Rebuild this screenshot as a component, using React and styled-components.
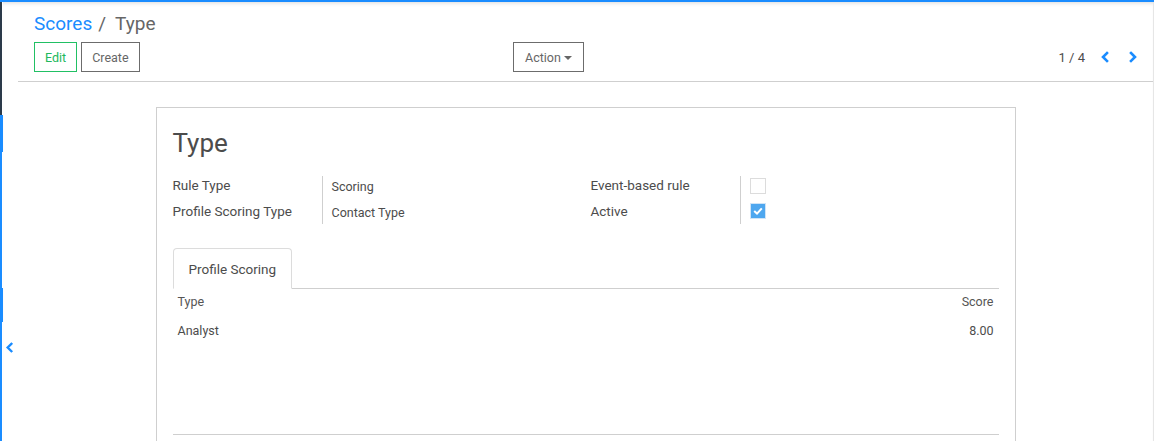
import React from 'react';
import styled, { createGlobalStyle } from 'styled-components';

const Global = createGlobalStyle`
  html, body {
    margin: 0;
    padding: 0;
    background: #fff;
    font-family: Roboto, "Liberation Sans", sans-serif;
    color: #4c4c4c;
  }
`;

const Frame = styled.div`
  position: relative;
  display: flex;
  width: 1154px;
  height: 441px;
  overflow: hidden;
  border-top: 2px solid #1a8cff;
  box-sizing: border-box;
`;

const Rail = styled.div`
  display: flex;
  flex-direction: column;
  width: 3px;
  flex: none;
`;

const RailPiece = styled.div`
  height: ${(p) => (p.h ? `${p.h}px` : 'auto')};
  flex: ${(p) => (p.h ? 'none' : '1')};
  width: ${(p) => p.w}px;
  background: ${(p) => (p.dark ? '#2b3a4a' : '#1a8cff')};
`;

const Toggle = styled.div`
  position: absolute;
  left: 4px;
  top: 340px;
  color: #1a8cff;
  display: flex;
`;

const Main = styled.div`
  flex: 1;
  display: flex;
  flex-direction: column;
  border-right: 1px solid #e6e6e6;
  box-shadow: inset 0 4px 4px -3px rgba(0, 0, 0, 0.15);
`;

const ControlPanel = styled.div`
  margin-left: 15px;
  padding: 9px 14px 9px 16px;
  border-bottom: 1px solid #cfcfcf;
`;

const Breadcrumb = styled.div`
  font-size: 19px;
  line-height: 24px;
  height: 24px;
  padding-top: 1px;
  margin-bottom: 6px;
  color: #666;
`;

const Crumb = styled.span`
  color: #1a8cff;
`;

const Sep = styled.span`
  margin: 0 9px 0 6px;
`;

const ButtonRow = styled.div`
  display: grid;
  grid-template-columns: 479px 1fr auto;
  align-items: center;
`;

const Group = styled.div`
  display: flex;
  gap: 4px;
`;

const Button = styled.button`
  height: 30px;
  padding: 0 ${(p) => p.pad || 10}px;
  background: #fff;
  border: 1px solid ${(p) => (p.primary ? '#21c064' : '#6c6c6c')};
  color: ${(p) => (p.primary ? '#21b85c' : '#666')};
  font-family: inherit;
  font-size: 12.5px;
  border-radius: 0;
  display: flex;
  align-items: center;
  gap: 3px;
`;

const Caret = styled.span`
  width: 0;
  height: 0;
  border-left: 4px solid transparent;
  border-right: 4px solid transparent;
  border-top: 4px solid #666;
  margin-top: 1px;
`;

const Pager = styled.div`
  display: flex;
  align-items: center;
  font-size: 13px;
  color: #4c4c4c;
`;

const PagerValue = styled.span`
  margin-right: 14px;
`;

const PagerBtn = styled.span`
  display: flex;
  color: #1a8cff;
  margin-left: ${(p) => p.gap}px;
`;

const Content = styled.div`
  flex: 1;
  padding-top: 25px;
  padding-left: 15px;
  display: flex;
  justify-content: center;
`;

const Sheet = styled.div`
  width: 860px;
  border: 1px solid #cfcfcf;
  padding: 17px 16px 0 16px;
  box-sizing: border-box;
  height: 400px;
`;

const Title = styled.h1`
  margin: 0 0 11px 0;
  font-size: 26px;
  font-weight: 400;
  line-height: 36px;
  color: #4c4c4c;
`;

const FieldGrid = styled.div`
  display: grid;
  grid-template-columns: 418px 1fr;
`;

const FieldGroup = styled.div`
  display: grid;
  grid-template-columns: 150px 1fr;
  grid-auto-rows: 26px;
`;

const Label = styled.div`
  font-size: 13.5px;
  line-height: 18px;
  border-right: 1px solid #cfcfcf;
  margin-top: ${(p) => (p.first ? '4px' : '0')};
  padding-top: ${(p) => (p.first ? '0' : '4px')};
`;

const Value = styled.div`
  font-size: 12.5px;
  line-height: 18px;
  padding-left: 9px;
  padding-top: 6px;
`;

const CheckCell = styled.div`
  padding-left: 9px;
  padding-top: ${(p) => (p.first ? '6px' : '5px')};
`;

const Check = styled.span`
  display: flex;
  align-items: center;
  justify-content: center;
  width: 16px;
  height: 16px;
  box-sizing: border-box;
  border: 1px solid ${(p) => (p.on ? '#cfe4f7' : '#dcdcdc')};
  background: ${(p) => (p.on ? '#4ea7ef' : '#fff')};
`;

const Tabs = styled.div`
  margin-top: 24px;
  display: flex;
  border-bottom: 1px solid #cfcfcf;
`;

const Tab = styled.div`
  height: 39px;
  padding: 0 15px;
  display: flex;
  align-items: center;
  font-size: 13.5px;
  border: 1px solid #dcdcdc;
  border-bottom: 1px solid #fff;
  border-radius: 4px 4px 0 0;
  margin-bottom: -1px;
  background: #fff;
`;

const Table = styled.div`
  height: 145px;
  border-bottom: 1px solid #cfcfcf;
`;

const TRow = styled.div`
  display: flex;
  justify-content: space-between;
  height: ${(p) => p.h}px;
  align-items: center;
  padding: 0 5px 0 5px;
  font-size: 12.5px;
  color: ${(p) => (p.head ? '#555' : '#4c4c4c')};
`;

const Chevron = ({ dir, size = 12, width = 2.6 }) => (
  <svg width={size} height={size} viewBox="0 0 12 12" fill="none">
    <path
      d={dir === 'left' ? 'M8 2 L4 6 L8 10' : 'M4 2 L8 6 L4 10'}
      stroke="currentColor"
      strokeWidth={width}
      strokeLinecap="square"
    />
  </svg>
);

const Tick = () => (
  <svg width="10" height="8" viewBox="0 0 10 8" fill="none">
    <path d="M1.2 4 L4 6.6 L8.8 1.4" stroke="#fff" strokeWidth="2" />
  </svg>
);

export default function App() {
  return (
    <>
      <Global />
      <Frame>
        <Rail>
          <RailPiece h={113} w={2} dark />
          <RailPiece h={37} w={3} />
          <RailPiece h={136} w={2} />
          <RailPiece h={34} w={3} />
          <RailPiece w={2} />
        </Rail>
        <Toggle>
          <Chevron dir="left" size={11} />
        </Toggle>
        <Main>
          <ControlPanel>
            <Breadcrumb>
              <Crumb>Scores</Crumb>
              <Sep>/</Sep>
              <span>Type</span>
            </Breadcrumb>
            <ButtonRow>
              <Group>
                <Button primary>Edit</Button>
                <Button>Create</Button>
              </Group>
              <Group>
                <Button pad={11}>
                  Action <Caret />
                </Button>
              </Group>
              <Pager>
                <PagerValue>1 / 4</PagerValue>
                <PagerBtn gap={0}>
                  <Chevron dir="left" />
                </PagerBtn>
                <PagerBtn gap={16}>
                  <Chevron dir="right" />
                </PagerBtn>
              </Pager>
            </ButtonRow>
          </ControlPanel>
          <Content>
            <Sheet>
              <Title>Type</Title>
              <FieldGrid>
                <FieldGroup>
                  <Label first>Rule Type</Label>
                  <Value>Scoring</Value>
                  <Label>Profile Scoring Type</Label>
                  <Value>Contact Type</Value>
                </FieldGroup>
                <FieldGroup>
                  <Label first>Event-based rule</Label>
                  <CheckCell first>
                    <Check />
                  </CheckCell>
                  <Label>Active</Label>
                  <CheckCell>
                    <Check on>
                      <Tick />
                    </Check>
                  </CheckCell>
                </FieldGroup>
              </FieldGrid>
              <Tabs>
                <Tab>Profile Scoring</Tab>
              </Tabs>
              <Table>
                <TRow h={25} head>
                  <span>Type</span>
                  <span>Score</span>
                </TRow>
                <TRow h={32}>
                  <span>Analyst</span>
                  <span>8.00</span>
                </TRow>
              </Table>
            </Sheet>
          </Content>
        </Main>
      </Frame>
    </>
  );
}
